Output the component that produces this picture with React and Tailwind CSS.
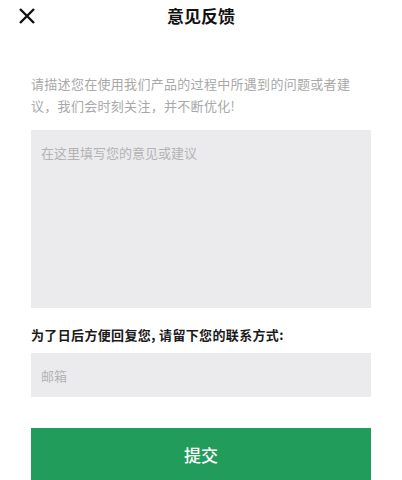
export default function App() {
  const font = { fontFamily: '"Noto Sans CJK SC", "Noto Sans", sans-serif' };
  return (
    <div className="w-[402px] h-[480px] overflow-hidden bg-white" style={font}>
      <div className="grid h-8 grid-cols-[1fr_auto_1fr] items-center">
        <div className="pl-[18px] flex items-center">
          <svg width="18" height="18" viewBox="0 0 18 18" fill="none">
            <path d="M2 2 L16 16 M16 2 L2 16" stroke="#111" strokeWidth="2.4" strokeLinecap="butt" />
          </svg>
        </div>
        <div className="text-[17px] font-bold text-[#111] leading-8">意见反馈</div>
        <div />
      </div>
      <div className="mx-[31px] mt-[41px] w-[326px] text-[13px] leading-[22px] tracking-[0.3px] text-[#a8a8a8]">
        请描述您在使用我们产品的过程中所遇到的问题或者建议，我们会时刻关注，并不断优化!
      </div>
      <div className="mx-[31px] mt-[13px]">
        <textarea
          className="block w-[340px] h-[178px] resize-none bg-[#ebebed] px-[10px] pt-[13px] text-[13px] leading-5 text-[#333] placeholder:text-[#b3b3b3] outline-none"
          placeholder="在这里填写您的意见或建议"
          style={font}
        />
        <div className="mt-[17px] text-[13px] leading-5 font-bold tracking-[0.35px] text-[#1a1a1a]">
          为了日后方便回复您, 请留下您的联系方式:
        </div>
        <input
          className="mt-2 block w-[340px] h-[44px] bg-[#ebebed] px-[10px] text-[13px] text-[#333] placeholder:text-[#b3b3b3] outline-none"
          placeholder="邮箱"
          style={font}
        />
        <button
          className="mt-[31px] flex h-[54px] w-[340px] items-center justify-center bg-[#219c5b] text-[17px] font-medium text-white"
          style={font}
        >
          提交
        </button>
      </div>
    </div>
  );
}
